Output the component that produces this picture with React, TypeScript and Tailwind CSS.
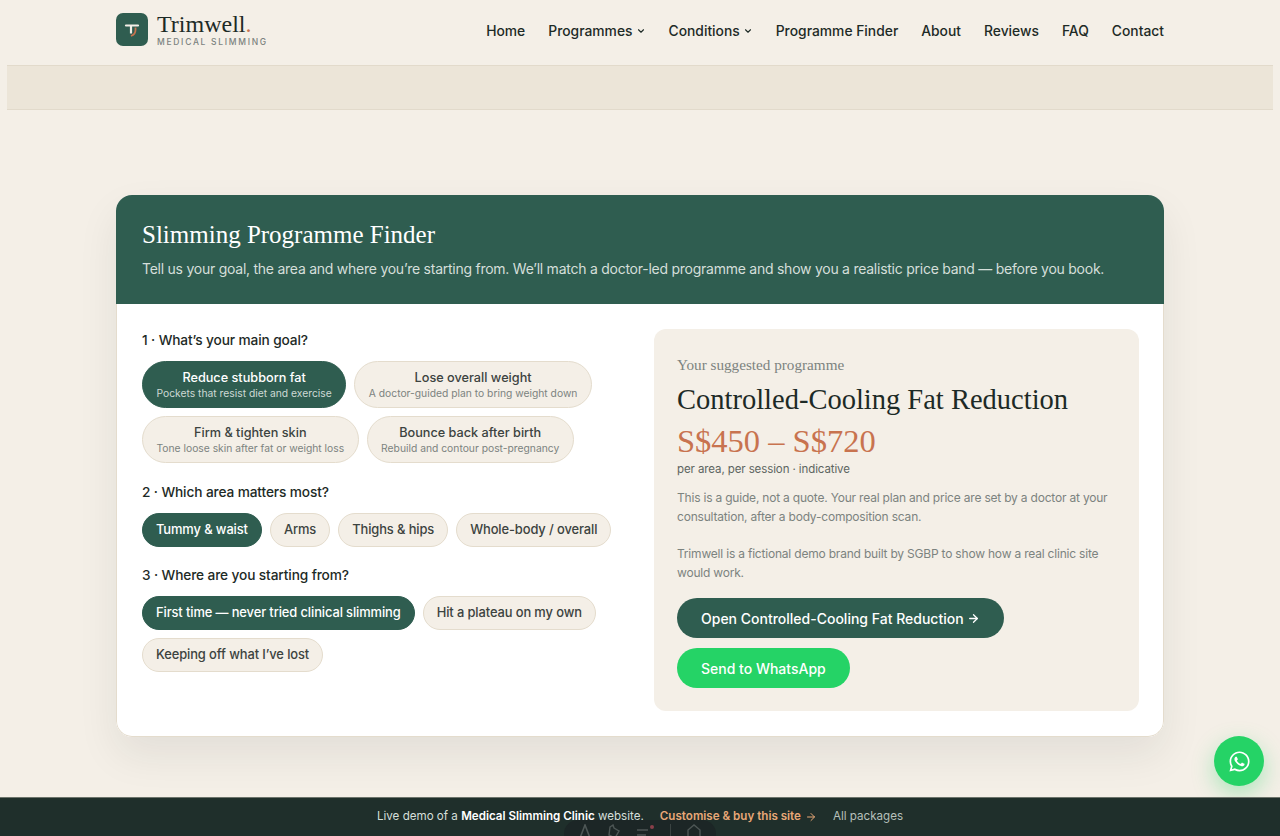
import { ArrowRight, ChevronDown } from 'lucide-react';
import { FaWhatsapp } from 'react-icons/fa';

const sans = "font-['Inter','Noto_Sans',sans-serif]";
const serif = "font-['Liberation_Serif','DejaVu_Serif',serif]";

const navItems = [
  { label: 'Home' },
  { label: 'Programmes', menu: true },
  { label: 'Conditions', menu: true },
  { label: 'Programme Finder' },
  { label: 'About' },
  { label: 'Reviews' },
  { label: 'FAQ' },
  { label: 'Contact' },
];

const goals = [
  { title: 'Reduce stubborn fat', sub: 'Pockets that resist diet and exercise', on: true },
  { title: 'Lose overall weight', sub: 'A doctor-guided plan to bring weight down' },
  { title: 'Firm & tighten skin', sub: 'Tone loose skin after fat or weight loss' },
  { title: 'Bounce back after birth', sub: 'Rebuild and contour post-pregnancy' },
];

function Chip({ label, on }: { label: string; on?: boolean }) {
  return (
    <button
      className={`h-[34px] rounded-full border px-[13px] text-[12.9px] font-medium tracking-[-0.1px] ${
        on ? 'border-[#2f5d50] bg-[#2f5d50] text-white' : 'border-[#e4dccd] bg-[#f4efe7] text-[#3c4340]'
      }`}
    >
      {label}
    </button>
  );
}

function Logo() {
  return (
    <div className="mb-[6px] flex items-center gap-[9px]">
      <div className="flex h-[33px] w-8 items-center justify-center rounded-[7px] bg-[#2f5d50]">
        <svg width="18" height="18" viewBox="0 0 18 18" fill="none">
          <path d="M12.5 6.5v2.5c0 3-1.6 5-4.5 6" stroke="#c8734f" strokeWidth="1.8" />
          <path d="M3 4.5h12" stroke="#f4efe7" strokeWidth="2.2" strokeLinecap="round" />
          <path d="M8 5v7.5" stroke="#f4efe7" strokeWidth="2.2" />
        </svg>
      </div>
      <div className="flex flex-col">
        <span className={`${serif} text-[24px] leading-[24px] text-[#1d2a26]`}>
          Trimwell<span className="text-[#c8734f]">.</span>
        </span>
        <span className={`${sans} mt-[1px] text-[8.5px] font-medium leading-[11px] tracking-[1.7px] text-[#7c837f]`}>
          MEDICAL SLIMMING
        </span>
      </div>
    </div>
  );
}

function ToolbarPill() {
  return (
    <div className="fixed bottom-0 left-[564px] flex h-[16px] w-[152px] items-start justify-between overflow-hidden rounded-t-[14px] bg-[#1c2626] px-[14px] pt-[4px] text-[#4d5655]">
      <svg width="14" height="14" viewBox="0 0 14 14" fill="none" stroke="currentColor" strokeWidth="1.6">
        <path d="M2 14 7 1l5 13" />
      </svg>
      <svg width="14" height="14" viewBox="0 0 14 14" fill="none" stroke="currentColor" strokeWidth="1.4">
        <path d="M3 3l3-2 1 3 5 3-4 7-6-3z" />
      </svg>
      <svg width="20" height="14" viewBox="0 0 20 14" fill="none">
        <path d="M1 6h11M1 11h9" stroke="currentColor" strokeWidth="1.6" />
        <circle cx="16" cy="3" r="2" fill="#8a3f4a" />
      </svg>
      <div className="h-[16px] w-px bg-[#3a4342]" />
      <svg width="16" height="14" viewBox="0 0 16 14" fill="none" stroke="currentColor" strokeWidth="1.4">
        <path d="M2 14V6l6-5 6 5v8" />
      </svg>
    </div>
  );
}

export default function App() {
  return (
    <div className={`${sans} h-[836px] overflow-hidden bg-[#f4efe7] text-[#1d2a26]`}>
      {/* Top nav */}
      <header className="mx-auto flex h-[65px] w-[1048px] items-center justify-between">
        <Logo />
        <nav className="mb-[2px] flex items-center gap-[23px]">
          {navItems.map(item => (
            <a key={item.label} className="flex items-center gap-[3px] text-[13.85px] font-medium text-[#1d2a26]">
              {item.label}
              {item.menu && <ChevronDown className="h-[10px] w-[10px]" strokeWidth={2.6} />}
            </a>
          ))}
        </nav>
      </header>

      {/* Empty band */}
      <div className="mx-[7px] h-[45px] border-y border-[#e2dacb] bg-[#ece5d8]" />

      <main className="mx-auto mt-[85px] w-[1048px]">
        <div className="overflow-hidden rounded-[16px] bg-white shadow-[0_18px_40px_rgba(29,42,38,0.08)]">
          <div className="h-[109px] bg-[#2f5d50] px-[26px] pt-[23px] text-white">
            <h1 className={`${serif} text-[25px] leading-[34px]`}>Slimming Programme Finder</h1>
            <p className="mt-[6px] text-[14px] leading-[22px] tracking-[-0.25px] text-[#d5dfda]">
              Tell us your goal, the area and where you’re starting from. We’ll match a doctor-led programme and show you a realistic price band — before you book.
            </p>
          </div>

          <div className="flex h-[433px] justify-between rounded-b-[16px] border-x border-b border-[#e4dccd] pl-[25px] pr-[24px] pt-[25px]">
            {/* Questions */}
            <div className="w-[490px]">
              <h3 className="text-[13.7px] font-medium leading-[22px] tracking-[-0.12px]">1 · What’s your main goal?</h3>
              <div className="mt-[10px] flex flex-wrap gap-[8px]">
                {goals.map(g => (
                  <button
                    key={g.title}
                    className={`flex h-[47px] flex-col items-center justify-center rounded-full border px-[13.5px] ${
                      g.on ? 'border-[#2f5d50] bg-[#2f5d50] text-white' : 'border-[#e4dccd] bg-[#f4efe7] text-[#3c4340]'
                    }`}
                  >
                    <span className="text-[12.7px] font-medium leading-[16px]">{g.title}</span>
                    <span className={`text-[10.3px] leading-[14px] ${g.on ? 'text-[#cdd9d4]' : 'text-[#7c837f]'}`}>{g.sub}</span>
                  </button>
                ))}
              </div>

              <h3 className="mt-[18px] text-[13.7px] font-medium leading-[22px] tracking-[-0.12px]">2 · Which area matters most?</h3>
              <div className="mt-[10px] flex flex-wrap gap-[8px]">
                <Chip label="Tummy & waist" on />
                <Chip label="Arms" />
                <Chip label="Thighs & hips" />
                <Chip label="Whole-body / overall" />
              </div>

              <h3 className="mt-[17px] text-[13.7px] font-medium leading-[22px] tracking-[-0.12px]">3 · Where are you starting from?</h3>
              <div className="mt-[10px] flex flex-wrap gap-[8px]">
                <Chip label="First time — never tried clinical slimming" on />
                <Chip label="Hit a plateau on my own" />
                <Chip label="Keeping off what I’ve lost" />
              </div>
            </div>

            {/* Result */}
            <div className="h-[382px] w-[485px] rounded-[12px] bg-[#f4efe7] px-[23px] pt-[25px]">
              <p className={`${serif} text-[15.2px] leading-[22px] text-[#7c837f]`}>Your suggested programme</p>
              <h2 className={`${serif} mt-[5px] text-[28.5px] leading-[38px] text-[#1d2a26]`}>Controlled-Cooling Fat Reduction</h2>
              <p className={`${serif} mt-[2px] text-[32.5px] leading-[40px] text-[#c8734f]`}>S$450 – S$720</p>
              <p className="text-[11.5px] leading-[16px] tracking-[-0.1px] text-[#5d6561]">per area, per session · indicative</p>
              <p className="mt-[11px] text-[12px] leading-[19px] tracking-[-0.2px] text-[#7c837f]">
                This is a guide, not a quote. Your real plan and price are set by a doctor at your consultation, after a body-composition scan.
              </p>
              <p className="mt-[18px] text-[12px] leading-[19px] tracking-[-0.2px] text-[#7c837f]">
                Trimwell is a fictional demo brand built by SGBP to show how a real clinic site would work.
              </p>
              <button className="mt-[16px] flex h-[40px] items-center gap-[3px] rounded-full bg-[#2f5d50] px-[24px] text-[14px] font-medium text-white">
                Open Controlled-Cooling Fat Reduction
                <ArrowRight className="h-[13px] w-[13px]" strokeWidth={2.4} />
              </button>
              <button className="mt-[10px] flex h-[40px] items-center rounded-full bg-[#25d366] px-[24px] text-[14px] font-medium text-white">
                Send to WhatsApp
              </button>
            </div>
          </div>
        </div>
      </main>

      {/* WhatsApp float */}
      <a className="fixed bottom-[50px] right-[16px] flex h-[50px] w-[50px] items-center justify-center rounded-full bg-[#25d366] text-white shadow-[0_8px_22px_rgba(37,211,102,0.35)]">
        <FaWhatsapp className="h-[23px] w-[23px]" />
      </a>

      {/* Demo bar */}
      <div className="fixed inset-x-0 bottom-0 flex h-[39px] items-center justify-center gap-[16px] border-t border-[#e4dccd]/40 bg-[#1f2f2b] text-[11.6px] text-[#d5dfda]">
        <span>
          Live demo of a <b className="font-semibold text-white">Medical Slimming Clinic</b> website.
        </span>
        <span className="flex items-center gap-[4px] font-semibold text-[#e8a877]">
          Customise &amp; buy this site <ArrowRight className="h-3 w-3" />
        </span>
        <span className="text-[#b6c0bb]">All packages</span>
      </div>
      <ToolbarPill />
    </div>
  );
}
